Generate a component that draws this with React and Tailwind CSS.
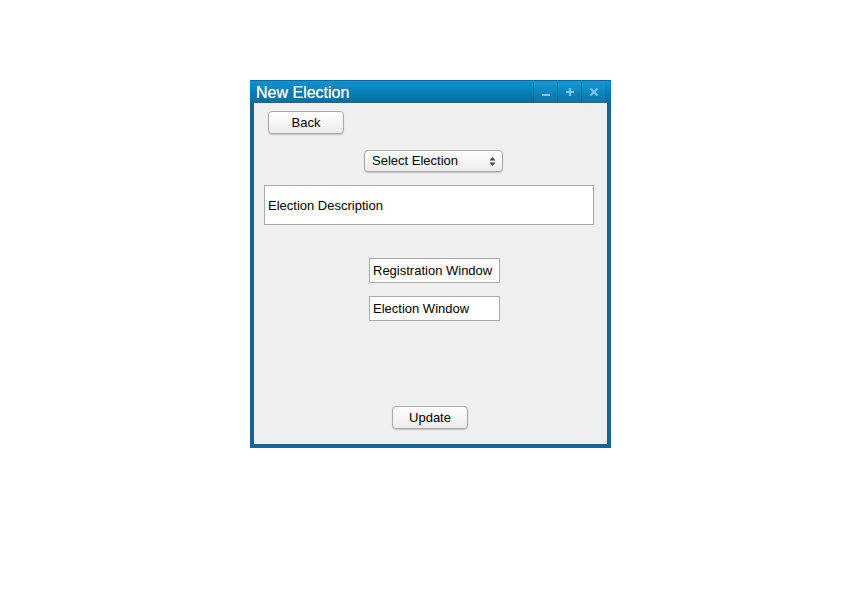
import React from 'react';

const font = { fontFamily: '"Liberation Sans", Arial, sans-serif' };

const MacButton = ({ children, className = '' }) => (
  <button
    className={`flex items-center justify-center rounded-[4px] border border-[#a9a9a9] bg-gradient-to-b from-white to-[#ececec] text-[13px] text-black shadow-[0_1px_1px_rgba(0,0,0,0.18)] ${className}`}
  >
    {children}
  </button>
);

const TitleButton = ({ children }) => (
  <div className="flex h-[21px] w-[24px] items-center justify-center border-l border-[#0a5f8c] bg-gradient-to-b from-[#1597d6] to-[#0874a8]">
    {children}
  </div>
);

export default function App() {
  return (
    <div className="min-h-[607px] w-[868px] bg-white pl-[250px] pt-[80px]" style={font}>
      <div className="flex h-[368px] w-[361px] flex-col border-x-4 border-b-4 border-t border-[#176592] bg-[#efefef]">
        <div className="-mx-[4px] flex h-[22px] items-center justify-between bg-gradient-to-b from-[#0b93d4] to-[#066c9e] pl-[6px] pr-[6px]">
          <span className="mt-[1px] text-[16px] leading-none text-white [text-shadow:0_0_0.4px_white]">New Election</span>
          <div className="flex h-[21px] items-stretch">
            <TitleButton>
              <div className="mt-[6px] h-[2px] w-[8px] bg-[#7cc4e8]" />
            </TitleButton>
            <TitleButton>
              <svg width="10" height="10" viewBox="0 0 10 10">
                <path d="M5 1v8M1 5h8" stroke="#7cc4e8" strokeWidth="2.2" />
              </svg>
            </TitleButton>
            <TitleButton>
              <svg width="10" height="10" viewBox="0 0 10 10">
                <path d="M1.5 1.5l7 7M8.5 1.5l-7 7" stroke="#7cc4e8" strokeWidth="2.2" />
              </svg>
            </TitleButton>
          </div>
        </div>

        <div className="flex flex-col">
          <MacButton className="ml-[14px] mt-[8px] h-[23px] w-[76px]">Back</MacButton>

          <div className="mt-[16px] flex justify-center pl-[6px]">
            <div className="flex h-[22px] w-[139px] items-center justify-between rounded-[4px] border border-[#a9a9a9] bg-gradient-to-b from-white to-[#ececec] pl-[7px] pr-[6px] text-[13px] text-black shadow-[0_1px_1px_rgba(0,0,0,0.18)]">
              <span>Select Election</span>
              <svg width="7" height="11" viewBox="0 0 7 11">
                <path d="M3.5 1L6.5 4.5H0.5Z" fill="#444" />
                <path d="M3.5 10L6.5 6.5H0.5Z" fill="#444" />
              </svg>
            </div>
          </div>

          <div className="ml-[10px] mt-[13px] flex h-[40px] w-[330px] items-center border border-[#aaaaaa] bg-white pl-[3px] pt-[1px] text-[13px] text-black">
            Election Description
          </div>

          <div className="ml-[115px] mt-[33px] flex h-[25px] w-[131px] items-center border border-[#aaaaaa] bg-white pl-[3px] text-[13px] text-black">
            Registration Window
          </div>

          <div className="ml-[115px] mt-[13px] flex h-[25px] w-[131px] items-center border border-[#aaaaaa] bg-white pl-[3px] text-[13px] text-black">
            Election Window
          </div>

          <MacButton className="ml-[138px] mt-[85px] h-[23px] w-[76px]">Update</MacButton>
        </div>
      </div>
    </div>
  );
}
